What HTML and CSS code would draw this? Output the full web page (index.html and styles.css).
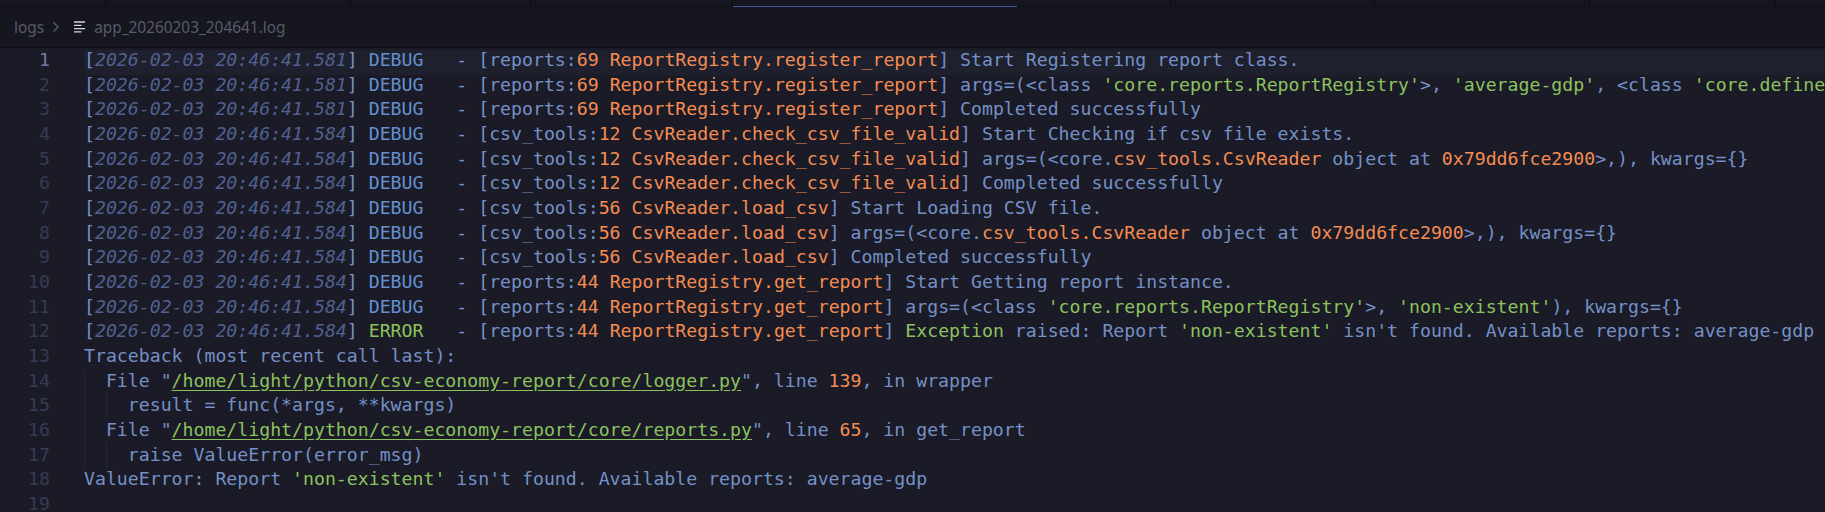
FILE: index.html
```html
<!DOCTYPE html>
<html lang="en">
<head>
<meta charset="utf-8">
<title>app_20260203_204641.log</title>
<link rel="stylesheet" href="styles.css">
</head>
<body>
<div class="tabs">
  <div class="tab t1"></div><div class="tab t2"></div><div class="tab t3"></div><div class="tab t4"></div><div class="tab active"></div><div class="tab t5"></div><div class="tab t6"></div><div class="tab t7"></div><div class="tab t8"></div><div class="tab rest"></div>
</div>
<div class="crumbs">
  <span class="crumb">logs</span>
  <svg class="chev" viewBox="0 0 8 12" width="8" height="12"><path d="M1.500 1.500 6 6l-4.500 4.500" fill="none" stroke="#5d6270" stroke-width="1.200"/></svg>
  <svg class="fileicon" viewBox="0 0 12 12" width="12" height="12"><path d="M0 1h11M0 4.300h7.500M0 7.600h11M0 10.800h7.500" fill="none" stroke="#d5d7dc" stroke-width="1.300"/></svg>
  <span class="crumb">app_20260203_204641.log</span>
</div>
<main class="editor">
<div class="line current"><span class="num">1</span><code><span class="b">[</span><i class="ts">2026-02-03 20:46:41.581</i><span class="b">]</span> <span class="lv">DEBUG</span>   - <span class="b">[</span>reports:<span class="o">69</span> <span class="o">ReportRegistry.register_report</span><span class="b">]</span> Start Registering report class.</code></div>
<div class="line"><span class="num">2</span><code><span class="b">[</span><i class="ts">2026-02-03 20:46:41.581</i><span class="b">]</span> <span class="lv">DEBUG</span>   - <span class="b">[</span>reports:<span class="o">69</span> <span class="o">ReportRegistry.register_report</span><span class="b">]</span> args=(&lt;class <span class="g">'core.reports.ReportRegistry'</span>&gt;, <span class="g">'average-gdp'</span>, &lt;class <span class="g">'core.define</span></code></div>
<div class="line"><span class="num">3</span><code><span class="b">[</span><i class="ts">2026-02-03 20:46:41.581</i><span class="b">]</span> <span class="lv">DEBUG</span>   - <span class="b">[</span>reports:<span class="o">69</span> <span class="o">ReportRegistry.register_report</span><span class="b">]</span> Completed successfully</code></div>
<div class="line"><span class="num">4</span><code><span class="b">[</span><i class="ts">2026-02-03 20:46:41.584</i><span class="b">]</span> <span class="lv">DEBUG</span>   - <span class="b">[</span>csv_tools:<span class="o">12</span> <span class="o">CsvReader.check_csv_file_valid</span><span class="b">]</span> Start Checking if csv file exists.</code></div>
<div class="line"><span class="num">5</span><code><span class="b">[</span><i class="ts">2026-02-03 20:46:41.584</i><span class="b">]</span> <span class="lv">DEBUG</span>   - <span class="b">[</span>csv_tools:<span class="o">12</span> <span class="o">CsvReader.check_csv_file_valid</span><span class="b">]</span> args=(&lt;core.<span class="o">csv_tools.CsvReader</span> object at <span class="o">0x79dd6fce2900</span>&gt;,), kwargs={}</code></div>
<div class="line"><span class="num">6</span><code><span class="b">[</span><i class="ts">2026-02-03 20:46:41.584</i><span class="b">]</span> <span class="lv">DEBUG</span>   - <span class="b">[</span>csv_tools:<span class="o">12</span> <span class="o">CsvReader.check_csv_file_valid</span><span class="b">]</span> Completed successfully</code></div>
<div class="line"><span class="num">7</span><code><span class="b">[</span><i class="ts">2026-02-03 20:46:41.584</i><span class="b">]</span> <span class="lv">DEBUG</span>   - <span class="b">[</span>csv_tools:<span class="o">56</span> <span class="o">CsvReader.load_csv</span><span class="b">]</span> Start Loading CSV file.</code></div>
<div class="line"><span class="num">8</span><code><span class="b">[</span><i class="ts">2026-02-03 20:46:41.584</i><span class="b">]</span> <span class="lv">DEBUG</span>   - <span class="b">[</span>csv_tools:<span class="o">56</span> <span class="o">CsvReader.load_csv</span><span class="b">]</span> args=(&lt;core.<span class="o">csv_tools.CsvReader</span> object at <span class="o">0x79dd6fce2900</span>&gt;,), kwargs={}</code></div>
<div class="line"><span class="num">9</span><code><span class="b">[</span><i class="ts">2026-02-03 20:46:41.584</i><span class="b">]</span> <span class="lv">DEBUG</span>   - <span class="b">[</span>csv_tools:<span class="o">56</span> <span class="o">CsvReader.load_csv</span><span class="b">]</span> Completed successfully</code></div>
<div class="line"><span class="num">10</span><code><span class="b">[</span><i class="ts">2026-02-03 20:46:41.584</i><span class="b">]</span> <span class="lv">DEBUG</span>   - <span class="b">[</span>reports:<span class="o">44</span> <span class="o">ReportRegistry.get_report</span><span class="b">]</span> Start Getting report instance.</code></div>
<div class="line"><span class="num">11</span><code><span class="b">[</span><i class="ts">2026-02-03 20:46:41.584</i><span class="b">]</span> <span class="lv">DEBUG</span>   - <span class="b">[</span>reports:<span class="o">44</span> <span class="o">ReportRegistry.get_report</span><span class="b">]</span> args=(&lt;class <span class="g">'core.reports.ReportRegistry'</span>&gt;, <span class="g">'non-existent'</span>), kwargs={}</code></div>
<div class="line"><span class="num">12</span><code><span class="b">[</span><i class="ts">2026-02-03 20:46:41.584</i><span class="b">]</span> <span class="err">ERROR</span>   - <span class="b">[</span>reports:<span class="o">44</span> <span class="o">ReportRegistry.get_report</span><span class="b">]</span> <span class="g">Exception</span> raised: Report <span class="g">'non-existent'</span> isn't found. Available reports: average-gdp</code></div>
<div class="line"><span class="num">13</span><code>Traceback (most recent call last):</code></div>
<div class="line"><span class="num">14</span><code class="guide">  File "<span class="link">/home/light/python/csv-economy-report/core/logger.py</span>", line <span class="o">139</span>, in wrapper</code></div>
<div class="line"><span class="num">15</span><code class="guide two">    result = func(*args, **kwargs)</code></div>
<div class="line"><span class="num">16</span><code class="guide">  File "<span class="link">/home/light/python/csv-economy-report/core/reports.py</span>", line <span class="o">65</span>, in get_report</code></div>
<div class="line"><span class="num">17</span><code class="guide two">    raise ValueError(error_msg)</code></div>
<div class="line"><span class="num">18</span><code>ValueError: Report <span class="g">'non-existent'</span> isn't found. Available reports: average-gdp</code></div>
<div class="line"><span class="num">19</span><code></code></div>
</main>
</body>
</html>
```
FILE: styles.css
```css
html, body {
  margin: 0;
  padding: 0;
  height: 512px;
  overflow: hidden;
  background: #1a1b26;
}
.tabs {
  display: flex;
  height: 6px;
  background: #16161e;
  border-bottom: 1px solid #101014;
}
.tab {
  box-sizing: border-box;
  border-right: 1px solid #0e0e12;
}
.t1 { width: 106px; }
.t2 { width: 245px; }
.t3 { width: 180px; }
.t4 { width: 202px; }
.active {
  width: 284px;
  height: 7px;
  border-right: 0;
  border-bottom: 1px solid #3d59a1;
}
.t5 { width: 154px; }
.t6 { width: 204px; }
.t7 { width: 215px; }
.t8 { width: 186px; }
.rest { flex: 1; border-right: 0; }
.crumbs {
  height: 41px;
  box-sizing: border-box;
  background: #16161e;
  border-bottom: 1px solid #101014;
  display: flex;
  align-items: center;
  padding-left: 14px;
  font: 15.400px "Noto Sans", sans-serif;
  color: #565b6b;
}
.chev { margin: 0 14px 0 8px; }
.fileicon { margin-right: 8px; }
.editor {
  padding-top: 2px;
  font: 18.200px "DejaVu Sans Mono", monospace;
  color: #7590c6;
}
.line {
  display: flex;
  height: 24.660px;
  line-height: 20.660px;
  white-space: pre;
}
.current { background: #1e202e; }
.num {
  flex: 0 0 84px;
  padding-right: 34px;
  text-align: right;
  color: #363b54;
  box-sizing: border-box;
}
.current .num { color: #737aa2; background: #1a1b26; }
code {
  font: inherit;
  position: relative;
}
.b { color: #7590c6; }
.ts { color: #51608f; }
.lv { color: #6490d0; }
.err { color: #8cc25e; }
.o { color: #f58c52; }
.g { color: #8cc25e; }
.link { color: #8cc25e; text-decoration: underline; text-underline-offset: 3px; }
.guide::before {
  content: "";
  position: absolute;
  left: 0;
  top: -2px;
  height: 25px;
  border-left: 1px solid #24263a;
}
.two::after {
  content: "";
  position: absolute;
  left: 22px;
  top: -2px;
  height: 25px;
  border-left: 1px solid #24263a;
}
```
